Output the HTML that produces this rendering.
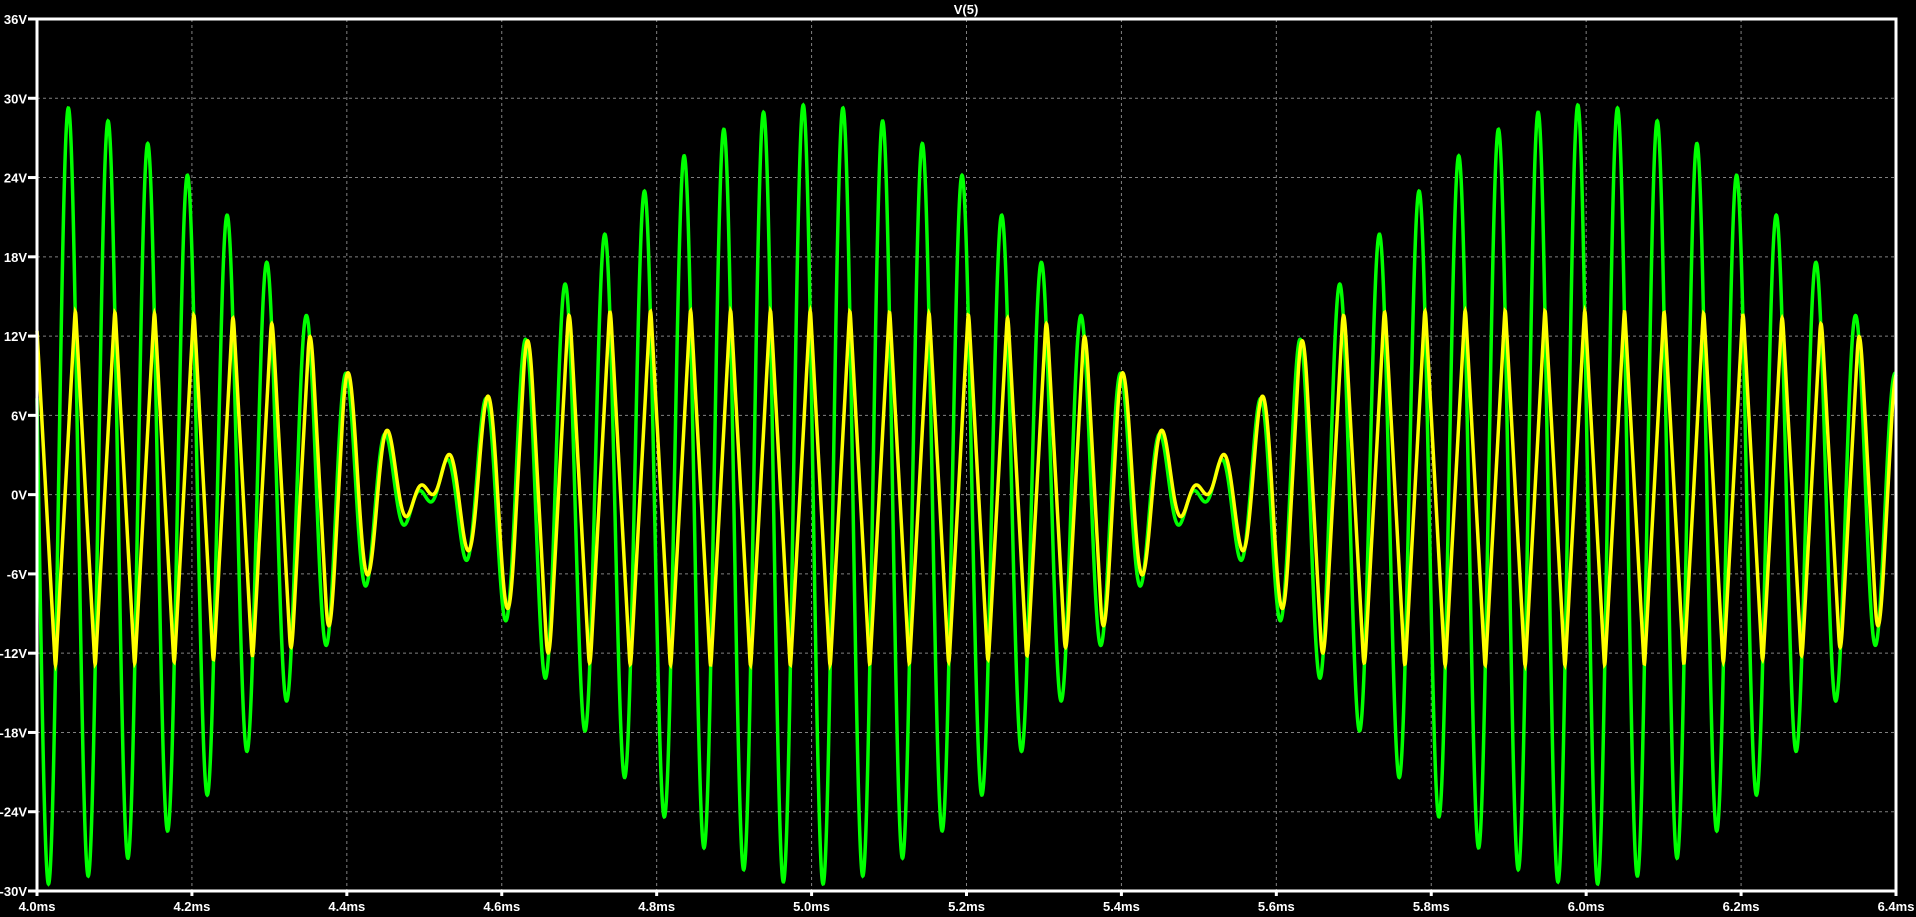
<!DOCTYPE html><html><head><style>
html,body{margin:0;background:#000;overflow:hidden}
svg{display:block}
text{font-family:"Liberation Sans",sans-serif;font-size:13px;fill:#fff;font-weight:bold}
</style></head><body>
<svg id="s" width="1916" height="917" viewBox="0 0 1916 917"></svg>
<script>
var s=document.getElementById('s');
var L=37,R=1896,T=19,B=891;
var h='';
function X(t){return L+(t-4.0)/2.4*(R-L);}
function Y(v){return T+(36-v)/66*(B-T);}
function G(t){var env=29.5*Math.cos(Math.PI*(t-4.0));return env*Math.cos(2*Math.PI*19.5*(t-4.0405));}
for(var i=1;i<12;i++){var x=X(4+i*0.2);h+='<line x1="'+x+'" y1="'+T+'" x2="'+x+'" y2="'+B+'" stroke="#808080" stroke-dasharray="3,3"/>';}
for(var v=-24;v<=30;v+=6){var y=Y(v);h+='<line x1="'+L+'" y1="'+y+'" x2="'+R+'" y2="'+y+'" stroke="#808080" stroke-dasharray="3,3"/>';}
var g='',yl='';
var dt=0.00005, S=1080, tau=0.0026, yv=G(3.8), t=3.8;
var pts=[];
var tEnd=6.41, nextX=L;
while(t<tEnd){
 var gv=G(t);
 var d=(gv-yv)/tau*dt, m=S*dt;
 if(d>m)d=m;if(d<-m)d=-m;
 yv+=d; t+=dt;
 if(t>=4.0){var x=X(t); if(x>=nextX){pts.push([x,yv]);nextX=x+0.25;}}
}
for(var i=0;i<pts.length;i++){var p=pts[i];if(p[0]>R)break;yl+=(i==0?'M':'L')+p[0].toFixed(2)+' '+Y(p[1]+0.5).toFixed(2);}
for(var x=L;x<=R;x+=0.25){
 var tt=4.0+(x-L)/(R-L)*2.4;
 g+=(x==L?'M':'L')+x.toFixed(2)+' '+Y(G(tt)).toFixed(2);
}
h+='<path d="'+g+'" fill="none" stroke="#00ff00" stroke-width="3.5"/>';
h+='<path d="'+yl+'" fill="none" stroke="#ffff00" stroke-width="3.5"/>';
h+='<rect x="'+L+'" y="'+T+'" width="'+(R-L)+'" height="'+(B-T)+'" fill="none" stroke="#fff" stroke-width="3"/>';
for(var v=-30;v<=36;v+=6){var y=Y(v);h+='<line x1="28" y1="'+y+'" x2="'+L+'" y2="'+y+'" stroke="#fff" stroke-width="3"/>';h+='<text x="27" y="'+(y+5)+'" text-anchor="end">'+v+'V</text>';}
for(var i=0;i<=12;i++){var x=X(4+i*0.2);h+='<line x1="'+x+'" y1="'+B+'" x2="'+x+'" y2="'+(B+5)+'" stroke="#fff" stroke-width="3"/>';
 var lab=(4+i*0.2).toFixed(1)+'ms';h+='<text x="'+x+'" y="'+(B+20)+'" text-anchor="middle">'+lab+'</text>';}
h+='<text x="966" y="14" text-anchor="middle">V(5)</text>';
s.innerHTML=h;
</script>
</body></html>
